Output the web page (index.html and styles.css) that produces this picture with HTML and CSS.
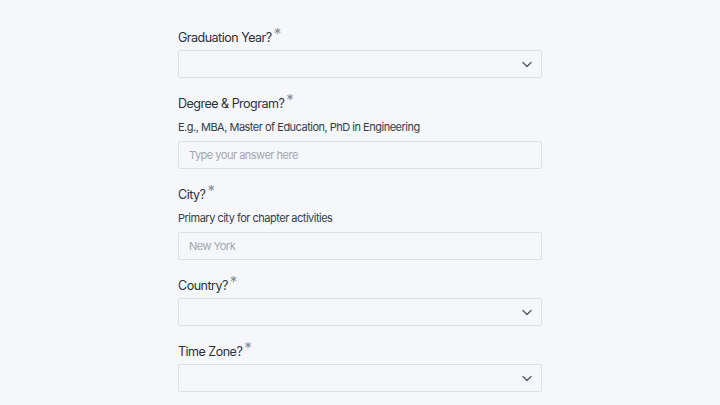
FILE: index.html
```html
<!DOCTYPE html>
<html>
<head>
    <link rel="stylesheet" href="styles.css">
</head>
<body>
    <form class="form">
        <div class="field">
            <label class="label">Graduation Year?<span class="req">*</span></label>
            <div class="select">
                <svg class="chevron" viewBox="0 0 12 12" width="12" height="12"><path d="M2 4.5l4 4 4-4" fill="none" stroke="#4a5261" stroke-width="1.2" stroke-linecap="round" stroke-linejoin="round"/></svg>
            </div>
        </div>

        <div class="field">
            <label class="label">Degree &amp; Program?<span class="req">*</span></label>
            <div class="help">E.g., MBA, Master of Education, PhD in Engineering</div>
            <input class="input" type="text" placeholder="Type your answer here">
        </div>

        <div class="field">
            <label class="label">City?<span class="req">*</span></label>
            <div class="help">Primary city for chapter activities</div>
            <input class="input" type="text" placeholder="New York">
        </div>

        <div class="field">
            <label class="label">Country?<span class="req">*</span></label>
            <div class="select">
                <svg class="chevron" viewBox="0 0 12 12" width="12" height="12"><path d="M2 4.5l4 4 4-4" fill="none" stroke="#4a5261" stroke-width="1.2" stroke-linecap="round" stroke-linejoin="round"/></svg>
            </div>
        </div>

        <div class="field">
            <label class="label">Time Zone?<span class="req">*</span></label>
            <div class="select">
                <svg class="chevron" viewBox="0 0 12 12" width="12" height="12"><path d="M2 4.5l4 4 4-4" fill="none" stroke="#4a5261" stroke-width="1.2" stroke-linecap="round" stroke-linejoin="round"/></svg>
            </div>
        </div>
    </form>
</body>
</html>
```

FILE: styles.css
```css
body {
    margin: 0;
    background-color: #f6f7fa;
    font-family: Inter, "Noto Sans", sans-serif;
    letter-spacing: -0.5px;
    color: #2a303b;
}

.form {
    width: 364px;
    margin: 0 auto;
    padding-top: 27px;
    display: flex;
    flex-direction: column;
    gap: 15px;
}

.field {
    display: flex;
    flex-direction: column;
}

.label {
    font-size: 12.5px;
    line-height: 20px;
    padding-top: 1px;
    margin-bottom: 2px;
}

.req {
    color: #868b94;
    font-size: 15px;
    line-height: 0;
    margin-left: 2px;
    position: relative;
    top: -3px;
}

.help {
    font-size: 11px;
    line-height: 20px;
    margin-top: 1px;
    margin-bottom: 4px;
    color: #353c48;
}

.input,
.select {
    box-sizing: border-box;
    width: 100%;
    height: 28px;
    border: 1px solid #dde1e7;
    border-radius: 2px;
    background-color: #f6f7fa;
}

.input {
    padding: 0 10px;
    font-family: inherit;
    letter-spacing: inherit;
    font-size: 11px;
    color: #2a303b;
    outline: none;
}

.input::placeholder {
    color: #a0a6b1;
}

.select {
    display: flex;
    align-items: center;
    justify-content: flex-end;
    padding-right: 8px;
}
```
